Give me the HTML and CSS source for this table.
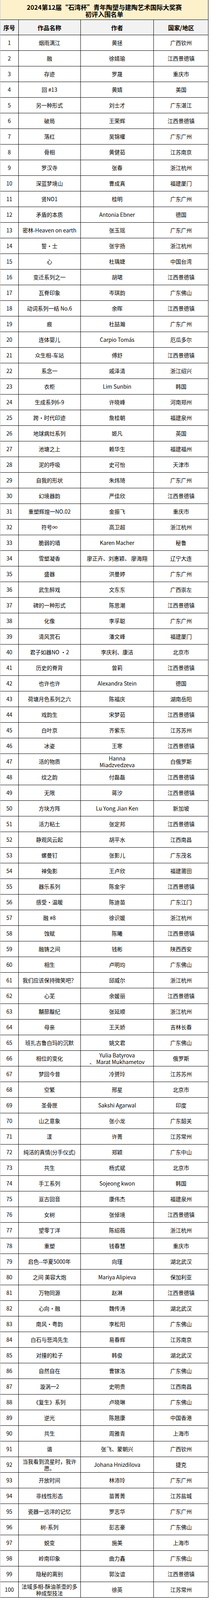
FILE: index.html
```html
<!DOCTYPE html>
<html lang="zh-CN">
<head>
<meta charset="utf-8">
<title>初评入围名单</title>
<link rel="stylesheet" href="styles.css">
</head>
<body>
<div class="sheet">
  <div class="title">
    <div>2024第12届“石湾杯”青年陶塑与建陶艺术国际大奖赛</div>
    <div>初评入围名单</div>
  </div>
  <div class="row hdr"><div>序号</div><div>作品名称</div><div>作者</div><div>国家/地区</div></div>
  <div class="row"><div>1</div><div>烟雨漓江</div><div>黄拯</div><div>广西钦州</div></div>
  <div class="row"><div>2</div><div>融</div><div>徐婧瑜</div><div>江西景德镇</div></div>
  <div class="row"><div>3</div><div>存迹</div><div>罗晟</div><div>重庆市</div></div>
  <div class="row"><div>4</div><div>回 #13</div><div>黄婧</div><div>美国</div></div>
  <div class="row"><div>5</div><div>另一种形式</div><div>刘士才</div><div>广东湛江</div></div>
  <div class="row"><div>6</div><div>破局</div><div>王荣辉</div><div>江西景德镇</div></div>
  <div class="row"><div>7</div><div>落红</div><div>吴锦權</div><div>广东广州</div></div>
  <div class="row"><div>8</div><div>骨相</div><div>黄健茹</div><div>江苏南京</div></div>
  <div class="row"><div>9</div><div>罗汉寺</div><div>张春</div><div>浙江杭州</div></div>
  <div class="row"><div>10</div><div>深蓝梦境山</div><div>曹成真</div><div>福建厦门</div></div>
  <div class="row"><div>11</div><div>贤NO1</div><div>桂明</div><div>广东广州</div></div>
  <div class="row"><div>12</div><div>矛盾的本质</div><div>Antonia Ebner</div><div>德国</div></div>
  <div class="row"><div>13</div><div>密林-Heaven on earth</div><div>张玉瑶</div><div>广东广州</div></div>
  <div class="row"><div>14</div><div>誓·士</div><div>张宇扬</div><div>浙江杭州</div></div>
  <div class="row"><div>15</div><div>心</div><div>杜瑀婕</div><div>中国台湾</div></div>
  <div class="row"><div>16</div><div>变迁系列之一</div><div>胡珺</div><div>江西景德镇</div></div>
  <div class="row"><div>17</div><div>瓦脊印象</div><div>岑琪韵</div><div>广东佛山</div></div>
  <div class="row"><div>18</div><div>动词系列一结 No.6</div><div>余晖</div><div>江西景德镇</div></div>
  <div class="row"><div>19</div><div>痕</div><div>杜喆瀚</div><div>广东广州</div></div>
  <div class="row"><div>20</div><div>连体婴儿</div><div>Carpio Tomás</div><div>厄瓜多尔</div></div>
  <div class="row"><div>21</div><div>众生相-车站</div><div>傅舒</div><div>江西景德镇</div></div>
  <div class="row"><div>22</div><div>系念一</div><div>戚泽清</div><div>浙江绍兴</div></div>
  <div class="row"><div>23</div><div>衣柜</div><div>Lim Sunbin</div><div>韩国</div></div>
  <div class="row"><div>24</div><div>生成系列6-9</div><div>许晓峰</div><div>河南郑州</div></div>
  <div class="row"><div>25</div><div>跨•时代印迹</div><div>詹桂朝</div><div>福建泉州</div></div>
  <div class="row"><div>26</div><div>地球病灶系列</div><div>姬凡</div><div>英国</div></div>
  <div class="row"><div>27</div><div>池塘之上</div><div>赖华生</div><div>福建福州</div></div>
  <div class="row"><div>28</div><div>泥的呼吸</div><div>史可怡</div><div>天津市</div></div>
  <div class="row"><div>29</div><div>自我的形状</div><div>朱炜琦</div><div>广东广州</div></div>
  <div class="row"><div>30</div><div>幻境器韵</div><div>严佳欣</div><div>江西景德镇</div></div>
  <div class="row"><div>31</div><div>重塑辉煌一NO.02</div><div>金振飞</div><div>重庆市</div></div>
  <div class="row"><div>32</div><div>符号∞</div><div>高卫超</div><div>浙江杭州</div></div>
  <div class="row"><div>33</div><div>脆弱的墙</div><div>Karen Macher</div><div>秘鲁</div></div>
  <div class="row"><div>34</div><div>雪塑凝香</div><div>廖正卉、刘惠颖、 廖海翔</div><div>辽宁大连</div></div>
  <div class="row"><div>35</div><div>盛器</div><div>洪曼婷</div><div>广东广州</div></div>
  <div class="row"><div>36</div><div>武生醉戏</div><div>文东东</div><div>广西崇左</div></div>
  <div class="row"><div>37</div><div>碑的一种形式</div><div>陈思潮</div><div>江西景德镇</div></div>
  <div class="row"><div>38</div><div>化像</div><div>李孚聪</div><div>广东广州</div></div>
  <div class="row"><div>39</div><div>清风赏石</div><div>潘文峰</div><div>福建厦门</div></div>
  <div class="row"><div>40</div><div>君子如器NO ·2</div><div>李庆利、康洁</div><div>北京市</div></div>
  <div class="row"><div>41</div><div>历史的脊背</div><div>曾莉</div><div>江西景德镇</div></div>
  <div class="row"><div>42</div><div>也许也许</div><div>Alexandra Stein</div><div>德国</div></div>
  <div class="row"><div>43</div><div>荷塘月色系列之六</div><div>陈福庆</div><div>湖南岳阳</div></div>
  <div class="row"><div>44</div><div>戏韵生</div><div>宋梦茹</div><div>江西景德镇</div></div>
  <div class="row"><div>45</div><div>白叶京</div><div>齐紫东</div><div>江苏苏州</div></div>
  <div class="row"><div>46</div><div>冰姿</div><div>王寒</div><div>江西景德镇</div></div>
  <div class="row"><div>47</div><div>活的物质</div><div>Hanna<br>Miadzvedzeva</div><div>白俄罗斯</div></div>
  <div class="row"><div>48</div><div>纹之韵</div><div>付磊磊</div><div>江西景德镇</div></div>
  <div class="row"><div>49</div><div>无限</div><div>蒋汐</div><div>江西景德镇</div></div>
  <div class="row"><div>50</div><div>方块方阵</div><div>Lu Yong Jian Ken</div><div>新加坡</div></div>
  <div class="row"><div>51</div><div>活力粘土</div><div>张定邦</div><div>江西景德镇</div></div>
  <div class="row"><div>52</div><div>静观风云起</div><div>胡平水</div><div>江西南昌</div></div>
  <div class="row"><div>53</div><div>螺曼钉</div><div>张影儿</div><div>广东茂名</div></div>
  <div class="row"><div>54</div><div>禅兔影</div><div>王卢欣</div><div>福建莆田</div></div>
  <div class="row"><div>55</div><div>器乐系列</div><div>陈金宇</div><div>江西景德镇</div></div>
  <div class="row"><div>56</div><div>感受·温暖</div><div>陈迪苗</div><div>广东江门</div></div>
  <div class="row"><div>57</div><div>融 #8</div><div>徐识媛</div><div>浙江杭州</div></div>
  <div class="row"><div>58</div><div>蚀赋</div><div>陈曦</div><div>江西景德镇</div></div>
  <div class="row"><div>59</div><div>融铸之间</div><div>钱彬</div><div>陕西西安</div></div>
  <div class="row"><div>60</div><div>相生</div><div>卢明均</div><div>广东佛山</div></div>
  <div class="row"><div>61</div><div>我们应该保持微笑吧？</div><div>邱威尔</div><div>浙江杭州</div></div>
  <div class="row"><div>62</div><div>心芜</div><div>余媛丽</div><div>江西景德镇</div></div>
  <div class="row"><div>63</div><div>黼蔀黻纪</div><div>张延顺</div><div>浙江杭州</div></div>
  <div class="row"><div>64</div><div>母亲</div><div>王天娇</div><div>吉林长春</div></div>
  <div class="row"><div>65</div><div>班扎古鲁白玛的沉默</div><div>姚文君</div><div>广东佛山</div></div>
  <div class="row"><div>66</div><div>相位的变化</div><div>Yulia Batyrova<br>、 Marat Mukhametov</div><div>俄罗斯</div></div>
  <div class="row"><div>67</div><div>梦回今昔</div><div>冷赟玲</div><div>江苏苏州</div></div>
  <div class="row"><div>68</div><div>空繁</div><div>邢星</div><div>北京市</div></div>
  <div class="row"><div>69</div><div>圣骨匣</div><div>Sakshi Agarwal</div><div>印度</div></div>
  <div class="row"><div>70</div><div>山之意象</div><div>张小龙</div><div>广东韶关</div></div>
  <div class="row"><div>71</div><div>漾</div><div>许菁</div><div>江苏常州</div></div>
  <div class="row"><div>72</div><div>纯洁的真情(分手仪式)</div><div>郑颖</div><div>广东中山</div></div>
  <div class="row"><div>73</div><div>共生</div><div>杨式斌</div><div>北京市</div></div>
  <div class="row"><div>74</div><div>手工系列</div><div>Sojeong kwon</div><div>韩国</div></div>
  <div class="row"><div>75</div><div>亘古回音</div><div>康伟杰</div><div>福建泉州</div></div>
  <div class="row"><div>76</div><div>女树</div><div>张倬境</div><div>江西景德镇</div></div>
  <div class="row"><div>77</div><div>望零丁洋</div><div>陈绍薇</div><div>浙江杭州</div></div>
  <div class="row"><div>78</div><div>重塑</div><div>钱春慧</div><div>重庆市</div></div>
  <div class="row"><div>79</div><div>启色--华夏5000年</div><div>向瑾</div><div>湖北武汉</div></div>
  <div class="row"><div>80</div><div>之间 美容大炮</div><div>Mariya Alipieva</div><div>保加利亚</div></div>
  <div class="row"><div>81</div><div>万物同源</div><div>赵淋</div><div>江西景德镇</div></div>
  <div class="row"><div>82</div><div>心向·融</div><div>魏传涛</div><div>湖北武汉</div></div>
  <div class="row"><div>83</div><div>南风·粤韵</div><div>李松阳</div><div>广东佛山</div></div>
  <div class="row"><div>84</div><div>白石与悲鸿先生</div><div>易春辉</div><div>江苏南京</div></div>
  <div class="row"><div>85</div><div>对撞的粒子</div><div>韩俊</div><div>湖北武汉</div></div>
  <div class="row"><div>86</div><div>自然自在</div><div>曹镓洛</div><div>广东佛山</div></div>
  <div class="row"><div>87</div><div>漩涡一2</div><div>史明贵</div><div>江西南昌</div></div>
  <div class="row"><div>88</div><div>《复生》系列</div><div>卢晓琳</div><div>广东佛山</div></div>
  <div class="row"><div>89</div><div>逆光</div><div>陈翘康</div><div>中国香港</div></div>
  <div class="row"><div>90</div><div>共生</div><div>周雅青</div><div>上海市</div></div>
  <div class="row"><div>91</div><div>谐</div><div>张飞、蒙朝兴</div><div>广西钦州</div></div>
  <div class="row"><div>92</div><div>当我看到流星时，我许<br>愿。</div><div>Johana Hnizdilova</div><div>捷克</div></div>
  <div class="row"><div>93</div><div>开放时间</div><div>林沛玲</div><div>广东广州</div></div>
  <div class="row"><div>94</div><div>非线性形态</div><div>苗菁菁</div><div>江苏盐城</div></div>
  <div class="row"><div>95</div><div>瓷器一远洋的记忆</div><div>罗志华</div><div>广东广州</div></div>
  <div class="row"><div>96</div><div>树-系列</div><div>彭志豪</div><div>广东佛山</div></div>
  <div class="row"><div>97</div><div>蜕变</div><div>施美</div><div>上海市</div></div>
  <div class="row"><div>98</div><div>岭南印象</div><div>曲力鑫</div><div>广东佛山</div></div>
  <div class="row"><div>99</div><div>隐秘的离别</div><div>郭汝谊</div><div>江西景德镇</div></div>
  <div class="row"><div>100</div><div>法域多相-酥油茶壶的多<br>种成型技法</div><div>徐英</div><div>江苏常州</div></div>
</div>
</body>
</html>
```

FILE: styles.css
```css
html, body {
  margin: 0;
  padding: 0;
  background: #ffffff;
}

body {
  font-family: "Noto Sans CJK SC", "Noto Sans", sans-serif;
  color: #000000;
}

.sheet {
  width: 534.3px;
  box-sizing: border-box;
  border-left: 1px solid #c4c4c4;
}

.title {
  height: 51.43px;
  box-sizing: border-box;
  background: #fdf1cc;
  border-right: 1px solid #000000;
  border-bottom: 1px solid #000000;
  display: flex;
  flex-direction: column;
  align-items: center;
  justify-content: center;
  padding-top: 3px;
  font-size: 16.2px;
  line-height: 18px;
  font-weight: 700;
  white-space: nowrap;
}

.row {
  display: grid;
  grid-template-columns: 46.67px 159.05px 187.62px 139.96px;
  height: 40px;
}

.row > div {
  box-sizing: border-box;
  border-right: 1px solid #000000;
  border-bottom: 1px solid #000000;
  display: flex;
  align-items: center;
  justify-content: center;
  text-align: center;
  white-space: nowrap;
  overflow: hidden;
  font-size: 13.8px;
  line-height: 17px;
}

.hdr {
  height: 39.05px;
  background: #f2f2f2;
}

.hdr > div {
  font-size: 15.2px;
  font-weight: 700;
}
```
